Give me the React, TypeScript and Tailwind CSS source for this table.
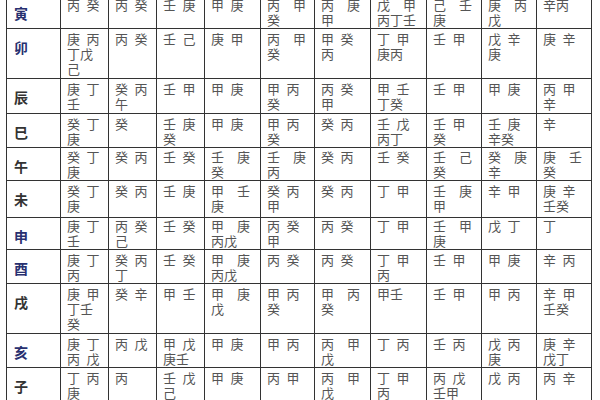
import React from "react";

const W = "\u3000"; // wide gap
const N = "\u2002"; // narrow gap

type Row = { k: string; navy: boolean; h: string; pt: string; cells: string[] };

const rows: Row[] = [
  { k: "寅", navy: true, h: "h-[34px]", pt: "pt-[2px]", cells: [`丙${N}癸`, `丙${N}癸`, `壬${N}庚`, `甲${N}庚`, `丙${W}甲\n癸`, `丙${W}庚\n甲`, `戊${W}甲\n丙丁壬`, `己${W}壬\n庚`, `庚${W}丙\n戊`, `辛丙`] },
  { k: "卯", navy: true, h: "h-[50px]", pt: "pt-[2px]", cells: [`庚${N}丙\n丁戊\n己`, `丙${N}癸`, `壬${N}己`, `庚${N}甲`, `丙${W}甲\n癸`, `甲${N}癸\n丙`, `丁${N}甲\n庚丙`, `壬${N}甲`, `戊${N}辛\n庚`, `庚${N}辛`] },
  { k: "辰", navy: false, h: "h-[35px]", pt: "pt-[2px]", cells: [`庚${N}丁\n壬`, `癸${N}丙\n午`, `壬${N}甲`, `甲${N}庚`, `甲${N}丙\n癸`, `丙${N}癸\n甲`, `甲${N}壬\n丁癸`, `壬${N}甲`, `甲${N}庚`, `丙${N}甲\n辛`] },
  { k: "巳", navy: false, h: "h-[34px]", pt: "pt-[2px]", cells: [`癸${N}丁\n庚`, `癸`, `壬${N}庚\n癸`, `甲${N}庚`, `甲${N}丙\n癸`, `癸${N}丙`, `壬${N}戊\n丙丁`, `壬${N}甲\n癸`, `壬${N}庚\n辛癸`, `辛`] },
  { k: "午", navy: false, h: "h-[33px]", pt: "pt-[1px]", cells: [`癸${N}丁\n庚`, `癸${N}丙`, `壬${N}癸`, `壬${W}庚\n癸`, `壬${W}庚\n丙`, `癸${N}丙`, `壬${N}癸`, `壬${W}己\n癸`, `癸${W}庚\n辛`, `庚${W}壬\n癸`] },
  { k: "未", navy: false, h: "h-[37px]", pt: "pt-[2px]", cells: [`癸${N}丁\n庚`, `癸${N}丙`, `壬${N}庚`, `甲${W}壬\n庚`, `癸${N}丙\n甲`, `癸${N}丙`, `丁${N}甲`, `壬${W}庚\n甲`, `辛${N}甲`, `庚${N}辛\n壬癸`] },
  { k: "申", navy: true, h: "h-[32px]", pt: "pt-0", cells: [`庚${N}丁\n壬`, `丙${N}癸\n己`, `壬${N}癸`, `甲${W}庚\n丙戊`, `丙${N}癸\n甲`, `丙${N}癸`, `丁${N}甲`, `壬${W}甲\n庚`, `戊${N}丁`, `丁`] },
  { k: "酉", navy: true, h: "h-[34px]", pt: "pt-[2px]", cells: [`庚${N}丁\n丙`, `癸${N}丙\n丁`, `壬${N}癸`, `甲${W}庚\n丙戊`, `丙${N}癸`, `丙${N}癸`, `丁${N}甲\n丙`, `壬${N}甲`, `甲${N}庚`, `辛${N}丙`] },
  { k: "戌", navy: false, h: "h-[50px]", pt: "pt-[2px]", cells: [`庚${N}甲\n丁壬\n癸`, `癸${N}辛`, `甲${N}壬`, `甲${W}庚\n戊`, `甲${N}丙\n癸`, `甲${W}丙\n癸`, `甲壬`, `壬${N}甲`, `甲${N}丙`, `辛${N}甲\n壬癸`] },
  { k: "亥", navy: true, h: "h-[34px]", pt: "pt-[2px]", cells: [`庚${N}丁\n丙${N}戊`, `丙${N}戊`, `甲${N}戊\n庚壬`, `甲${N}庚`, `甲${N}丙`, `丙${W}甲\n戊`, `丁${N}丙`, `壬${N}丙`, `戊${N}丙\n庚`, `庚${N}辛\n戊丁`] },
  { k: "子", navy: false, h: "h-[40px]", pt: "pt-[2px]", cells: [`丁${N}丙\n庚`, `丙`, `壬${N}戊\n己`, `甲${N}庚`, `丙${N}甲`, `丙${W}甲\n戊`, `丁${N}甲\n丙`, `丙${N}戊\n壬甲`, `戊${N}丙`, `丙${N}辛`] },
];

const widths = ["w-[48px]", "w-[48px]", "w-[48px]", "w-[56px]", "w-[54px]", "w-[56px]", "w-[56px]", "w-[55px]", "w-[55px]", "w-[55px]"];

export default function App() {
  return (
    <div
      className="w-[600px] h-[400px] overflow-hidden bg-white"
      style={{ fontFamily: '"Noto Sans CJK SC", "Noto Sans CJK JP", sans-serif' }}
    >
      <div className="ml-[6px] -mt-[6px] w-[586px] border-l border-t border-[#333333]">
        {rows.map((r) => (
          <div key={r.k} className={`flex ${r.h} border-b border-[#333333]`}>
            <div className="w-[54px] shrink-0 border-r border-[#333333] pl-[7px] pt-[5px]">
              <span
                className={`text-[14px] leading-[18px] font-bold ${r.navy ? "text-[#283070]" : "text-[#333333]"}`}
              >
                {r.k}
              </span>
            </div>
            {r.cells.map((c, i) => (
              <div
                key={i}
                className={`${widths[i]} shrink-0 border-r border-[#333333] pl-[6px] ${r.pt} text-[13px] leading-[15px] text-[#555555] whitespace-pre overflow-hidden`}
              >
                {c}
              </div>
            ))}
          </div>
        ))}
      </div>
    </div>
  );
}
